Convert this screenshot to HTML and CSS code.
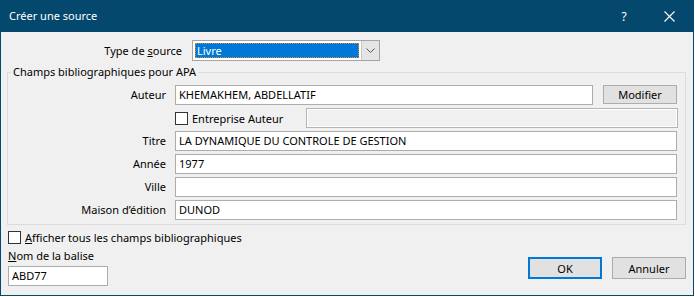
FILE: index.html
```html
<!DOCTYPE html>
<html lang="fr">
<head>
<meta charset="utf-8">
<title>Créer une source</title>
<link rel="stylesheet" href="styles.css">
</head>
<body>
<div class="dialog">
  <div class="titlebar">
    <span class="title">Créer une source</span>
    <span class="help">?</span>
    <span class="close"><svg width="11" height="11" viewBox="0 0 11 11"><path d="M0.5 0.5 L10.5 10.5 M10.5 0.5 L0.5 10.5" stroke="#fff" stroke-width="1.1" fill="none"/></svg></span>
  </div>
  <div class="body">
    <div class="type-row">
      <span class="type-label">Type de <u>s</u>ource</span>
      <div class="select">
        <div class="select-value"><span>Livre</span></div>
        <div class="select-btn"><svg width="9" height="5" viewBox="0 0 9 5"><path d="M0.5 0.5 L4.5 4.5 L8.5 0.5" stroke="#555" stroke-width="1" fill="none"/></svg></div>
      </div>
    </div>
    <fieldset class="group">
      <legend>Champs bibliographiques pour APA</legend>
      <div class="grid">
        <span class="lbl">Auteur</span>
        <div class="row">
          <div class="input grow">KHEMAKHEM, ABDELLATIF</div>
          <div class="btn modifier">Modifier</div>
        </div>
        <span class="lbl"></span>
        <div class="row">
          <span class="check"></span>
          <span class="check-text">Entreprise Auteur</span>
          <div class="input grow disabled"></div>
        </div>
        <span class="lbl">Titre</span>
        <div class="input">LA DYNAMIQUE DU CONTROLE DE GESTION</div>
        <span class="lbl">Année</span>
        <div class="input">1977</div>
        <span class="lbl">Ville</span>
        <div class="input"></div>
        <span class="lbl">Maison d’édition</span>
        <div class="input">DUNOD</div>
      </div>
    </fieldset>
    <div class="show-all">
      <span class="check"></span>
      <span class="show-text"><u>A</u>fficher tous les champs bibliographiques</span>
    </div>
    <div class="footer">
      <div class="tag">
        <div class="tag-label"><u>N</u>om de la balise</div>
        <div class="input tag-input">ABD77</div>
      </div>
      <div class="buttons">
        <div class="btn ok">OK</div>
        <div class="btn">Annuler</div>
      </div>
    </div>
  </div>
</div>
</body>
</html>
```

FILE: styles.css
```css
html, body {
  margin: 0;
  padding: 0;
  background: #ffffff;
}
body {
  font-family: "Noto Sans", "Open Sans", sans-serif;
  font-size: 11px;
  color: #000;
}
.dialog {
  width: 694px;
  height: 296px;
  box-sizing: border-box;
  border: 1px solid #05486e;
  border-top: none;
  background: #f0f0f0;
  display: flex;
  flex-direction: column;
}
.titlebar {
  height: 32px;
  margin: 0 -1px;
  background: #05486e;
  color: #fff;
  display: flex;
  align-items: center;
  padding-left: 9px;
  font-size: 11px;
}
.title {
  flex: 1;
  margin-top: -1px;
}
.help {
  width: 14px;
  margin-right: 33px;
  font-size: 12px;
  text-align: center;
}
.close {
  display: flex;
  margin-right: 19px;
}
.body {
  padding: 8px 7px 0 6px;
  display: flex;
  flex-direction: column;
}
.type-row {
  display: flex;
  align-items: center;
  height: 21px;
}
.type-label {
  width: 175px;
  text-align: right;
  margin-right: 10px;
  line-height: 16px;
}
.select {
  width: 188px;
  height: 21px;
  box-sizing: border-box;
  border: 1px solid #a5a5a5;
  background: #fff;
  display: flex;
}
.select-value {
  flex: 1;
  padding: 2px;
  display: flex;
}
.select-value span {
  flex: 1;
  background: #0078d7;
  color: #fff;
  outline: 1px dotted #e08a2a;
  outline-offset: -1px;
  padding-left: 2px;
  line-height: 15px;
}
.select-btn {
  width: 17px;
  background: #e5e5e5;
  border-left: 1px solid #c8c8c8;
  display: flex;
  align-items: center;
  justify-content: center;
}
.group {
  margin: 3px 0 0 0;
  padding: 5px 8px 4px 0;
  border: 1px solid #dcdcdc;
  min-width: 0;
}
.group legend {
  padding: 0 2px;
  margin-left: 3px;
  line-height: 16px;
}
.grid {
  display: grid;
  grid-template-columns: 158px 1fr;
  column-gap: 9px;
  row-gap: 3px;
  grid-auto-rows: 20px;
}
.lbl {
  text-align: right;
  line-height: 20px;
}
.row {
  display: flex;
  align-items: center;
}
.input {
  height: 20px;
  box-sizing: border-box;
  border: 1px solid #adadad;
  background: #fff;
  padding: 0 3px;
  line-height: 18px;
  white-space: nowrap;
  overflow: hidden;
}
.grow {
  flex: 1;
}
.disabled {
  background: #f0f0f0;
  box-shadow: inset 0 0 0 1px #fff;
  border-color: #b4b4b4;
  margin-right: -1px;
}
.btn {
  height: 22px;
  width: 74px;
  box-sizing: border-box;
  border: 1px solid #adadad;
  background: #e1e1e1;
  display: flex;
  align-items: center;
  justify-content: center;
}
.modifier {
  height: 19px;
  margin-left: 10px;
  margin-top: -1px;
}
.check {
  width: 13px;
  height: 13px;
  box-sizing: border-box;
  border: 1px solid #333;
  background: #fff;
  flex: none;
}
.check-text {
  margin-left: 4px;
  margin-right: 12px;
  width: 102px;
}
.show-all {
  display: flex;
  align-items: center;
  margin-top: 6px;
  height: 13px;
  padding-left: 1px;
}
.show-text {
  margin-left: 4px;
  line-height: 16px;
}
.footer {
  display: flex;
  justify-content: space-between;
  padding-left: 1px;
}
.tag-label {
  margin-top: 4px;
  line-height: 16px;
}
.tag-input {
  width: 100px;
  margin-top: 2px;
}
.buttons {
  display: flex;
  gap: 10px;
  margin-top: 13px;
}
.ok {
  border: 2px solid #0078d7;
}
```
